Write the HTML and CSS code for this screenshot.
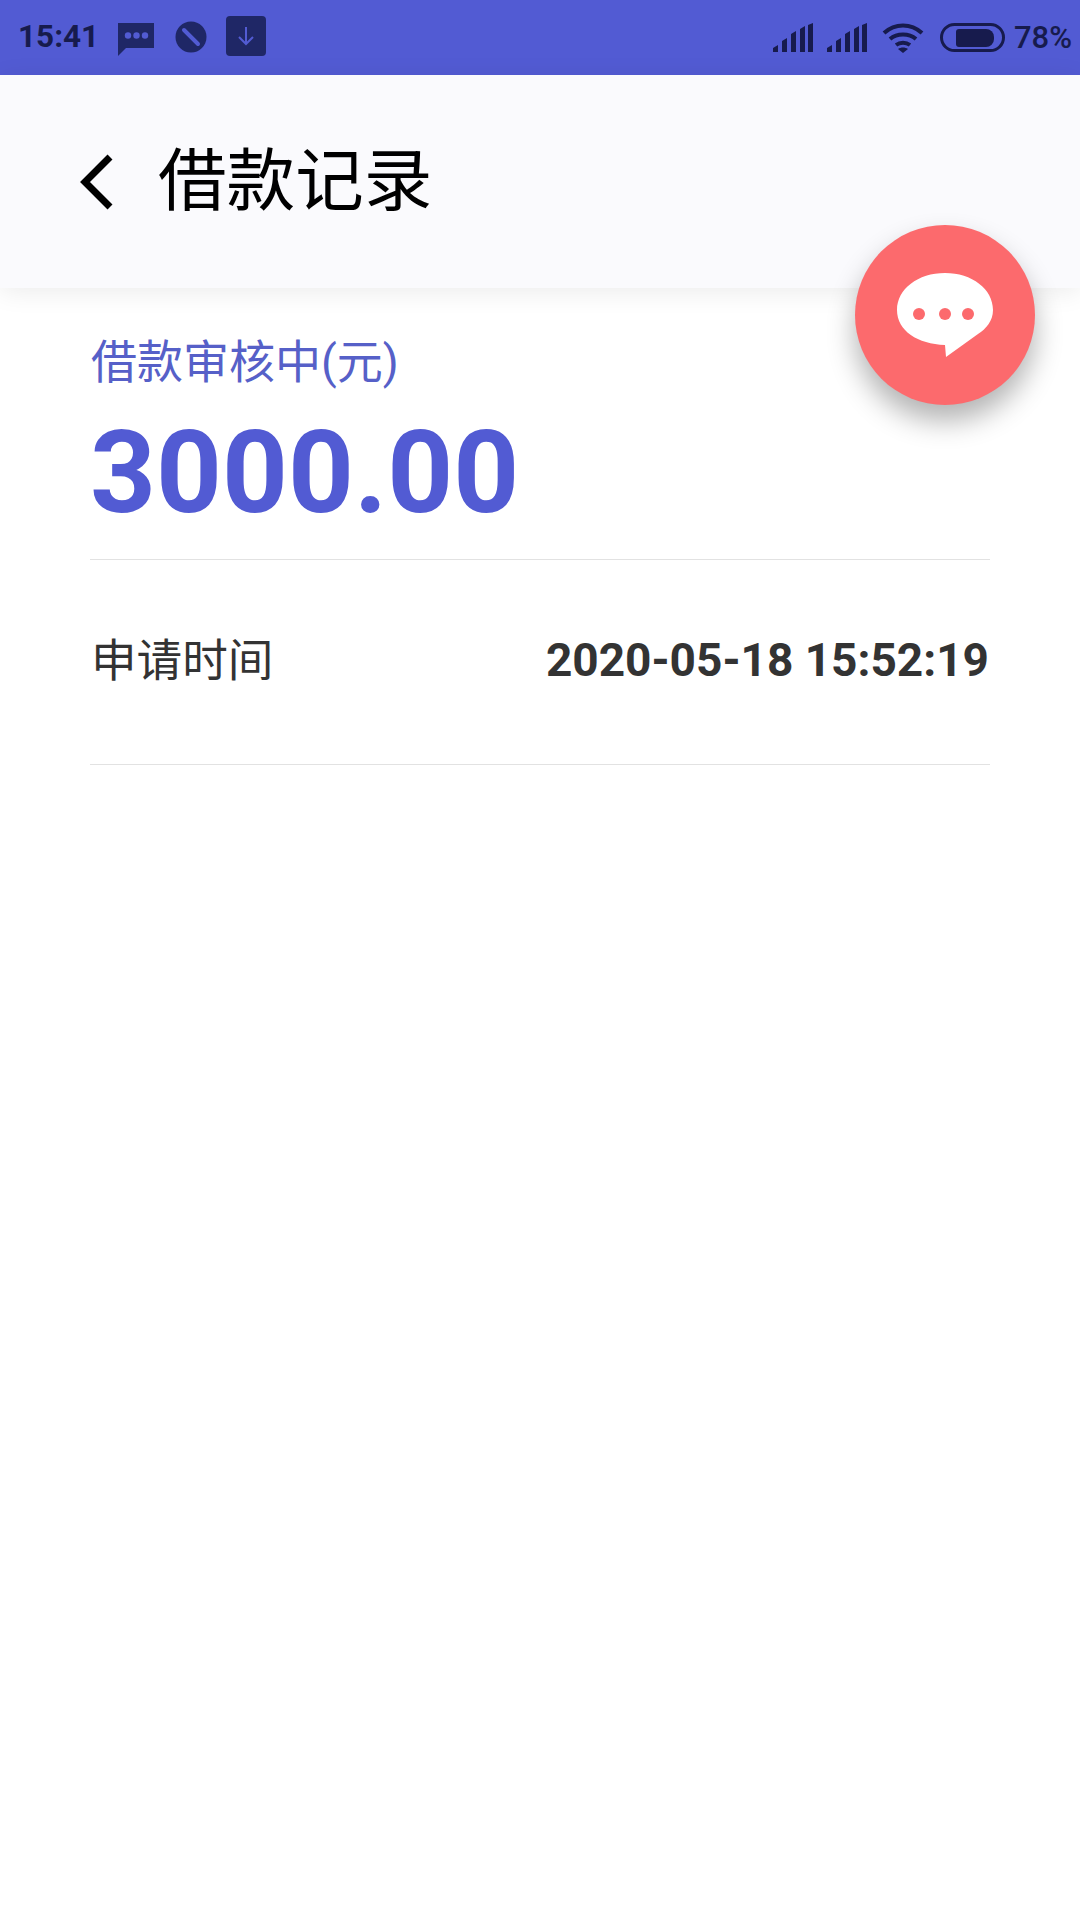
FILE: index.html
```html
<!DOCTYPE html>
<html>
<head>
    <title>借款记录</title>
    <meta charset="UTF-8">
    <link rel="stylesheet" href="styles.css">
</head>
<body>

<div class="status-bar">
    <div class="status-left">
        <span class="clock">15:41</span>
        <svg class="icon-msg" width="38" height="34" viewBox="0 0 38 34">
            <path d="M1 1H37V26H9L1 34Z" fill="#1f2766"/>
            <circle cx="11" cy="13.500" r="3.200" fill="#525bd3"/>
            <circle cx="19.500" cy="13.500" r="3.200" fill="#525bd3"/>
            <circle cx="28" cy="13.500" r="3.200" fill="#525bd3"/>
        </svg>
        <svg class="icon-block" width="32" height="32" viewBox="0 0 32 32">
            <circle cx="16" cy="16" r="15.500" fill="#1f2766"/>
            <path d="M9 9L23 23" stroke="#525bd3" stroke-width="4" stroke-linecap="round"/>
        </svg>
        <svg class="icon-download" width="40" height="40" viewBox="0 0 40 40">
            <rect width="40" height="40" rx="4" fill="#1f2766"/>
            <path d="M20 11V28M13 21L20 28L27 21" fill="none" stroke="#525bd3" stroke-width="2"/>
        </svg>
    </div>
    <div class="status-right">
        <svg width="40" height="30" viewBox="0 0 40 30">
            <path d="M0 29V25L5 22V29ZM9 29V18L14 15V29ZM18 29V11L23 8V29ZM27 29V6L32 3V29ZM35 29V2L40 0V29Z" fill="#171b4d"/>
        </svg>
        <svg width="40" height="30" viewBox="0 0 40 30">
            <path d="M0 29V25L5 22V29ZM9 29V18L14 15V29ZM18 29V11L23 8V29ZM27 29V6L32 3V29ZM35 29V2L40 0V29Z" fill="#171b4d"/>
        </svg>
        <svg class="icon-wifi" width="42" height="32" viewBox="0 0 42 32">
            <path d="M2 11C13 1 29 1 40 11M8 17C15 11 27 11 34 17M14 23C18 20 24 20 28 23" fill="none" stroke="#171b4d" stroke-width="4"/>
            <path d="M21 31L16 27C19 25 23 25 26 27Z" fill="#171b4d"/>
        </svg>
        <div class="battery"><div class="battery-fill"></div></div>
        <span class="percent">78%</span>
    </div>
</div>

<header class="top-bar">
    <svg class="back" width="34" height="56" viewBox="0 0 34 56">
        <path d="M31 3L6 28L31 53" fill="none" stroke="#000" stroke-width="7"/>
    </svg>
    <h1>借款记录</h1>
</header>

<main>
    <div class="amount-block">
        <p class="amount-label">借款审核中(元)</p>
        <p class="amount">3000.00</p>
    </div>
    <div class="row">
        <span class="row-label">申请时间</span>
        <span class="row-value">2020-05-18 15:52:19</span>
    </div>
</main>

<div class="fab">
    <svg width="98" height="98" viewBox="0 0 98 98">
        <path d="M49 7C76 7 97 23 97 44C97 55 90 63 82 68L50 91L49 79C22 78 1 65 1 44C1 23 22 7 49 7Z" fill="#fff"/>
        <circle cx="23" cy="48" r="6" fill="#fc6a6d"/>
        <circle cx="49" cy="48" r="6" fill="#fc6a6d"/>
        <circle cx="72" cy="48" r="6" fill="#fc6a6d"/>
    </svg>
</div>

</body>
</html>
```

FILE: styles.css
```css
body {
    margin: 0;
    background: #fff;
    font-family: Roboto, "Noto Sans CJK SC", sans-serif;
    width: 1080px;
    height: 1920px;
    overflow: hidden;
    position: relative;
}

p, h1 {
    margin: 0;
    font-weight: normal;
}

.status-bar {
    height: 75px;
    background: #525bd3;
    display: flex;
    justify-content: space-between;
    align-items: center;
    padding: 0 8px 0 18px;
    color: #171b4d;
    box-sizing: border-box;
}

.status-left {
    display: flex;
    align-items: center;
}

.clock {
    font-size: 31.500px;
    font-weight: bold;
    width: 99px;
    margin-top: -2px;
}

.icon-msg {
    margin-top: 3px;
    margin-right: 20px;
}

.icon-block {
    margin-right: 19px;
    margin-top: -2px;
}

.icon-download {
    margin-top: -3px;
}

.status-right {
    display: flex;
    align-items: center;
    gap: 14px;
}

.icon-wifi {
    margin-left: 1px;
}

.battery {
    height: 23px;
    border: 3px solid #171b4d;
    border-radius: 15px;
    display: flex;
    align-items: center;
    padding-left: 13px;
    width: 46px;
    margin-left: 2px;
}

.battery-fill {
    width: 38px;
    height: 18px;
    background: #171b4d;
    border-radius: 3px 8px 8px 3px;
}

.percent {
    font-size: 31px;
    font-weight: 500;
    margin-left: -5px;
}

.top-bar {
    height: 213px;
    background: #fafafd;
    display: flex;
    align-items: center;
    padding: 0 0 0 79px;
    box-sizing: border-box;
    box-shadow: 0 4px 24px rgba(0, 0, 0, 0.08);
    position: relative;
}

.top-bar .back {
    margin-right: 45px;
    margin-top: 0;
}

.top-bar h1 {
    font-size: 68.600px;
    color: #000;
    margin-top: -13px;
}

main {
    margin: 0 90px;
}

.amount-block {
    height: 272px;
    padding-top: 46px;
    box-sizing: border-box;
    border-bottom: 1px solid #e2e2e2;
}

.amount-label {
    font-size: 46px;
    line-height: 56px;
    color: #5660c8;
    padding-left: 1px;
}

.amount {
    font-size: 115px;
    font-weight: bold;
    line-height: 132px;
    color: #525bd3;
    margin-top: 17px;
}

.row {
    height: 205px;
    display: flex;
    justify-content: space-between;
    align-items: center;
    border-bottom: 1px solid #e2e2e2;
    box-sizing: border-box;
    padding: 0 1px 0 1px;
}

.row-label {
    font-size: 45.600px;
    color: #333;
    margin-top: -11px;
}

.row-value {
    font-size: 46px;
    font-weight: bold;
    color: #333;
    margin-top: -5px;
}

.fab {
    position: absolute;
    left: 855px;
    top: 225px;
    width: 180px;
    height: 180px;
    border-radius: 50%;
    background: #fc6a6d;
    box-shadow: 0 16px 28px rgba(0, 0, 0, 0.3);
    display: flex;
    justify-content: center;
    align-items: center;
}
```
